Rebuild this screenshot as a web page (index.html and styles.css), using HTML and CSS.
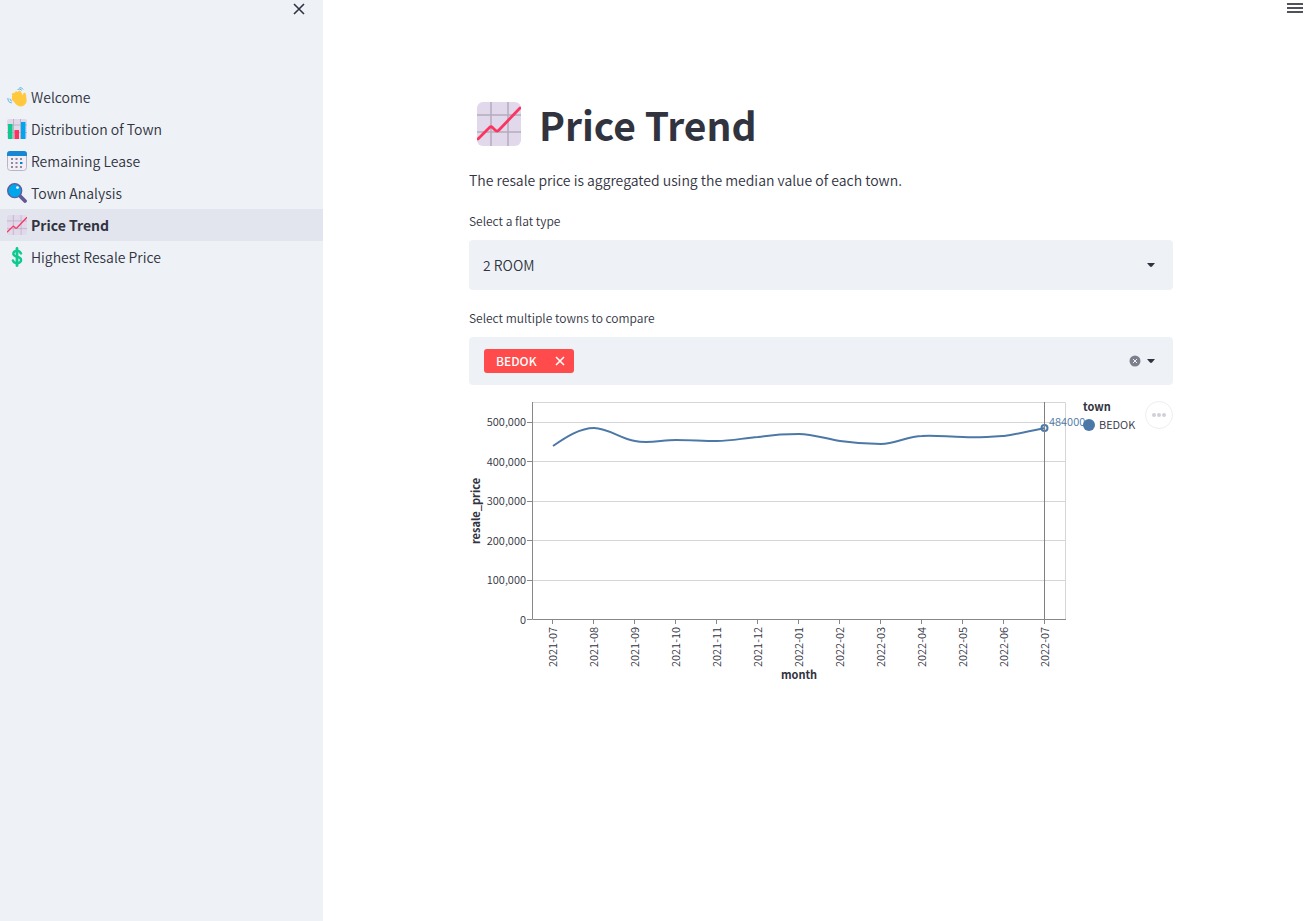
FILE: index.html
```html
<!DOCTYPE html>
<html lang="en">
<head>
<meta charset="utf-8">
<title>Price Trend</title>
<link rel="stylesheet" href="styles.css">
</head>
<body>
<svg class="defs" aria-hidden="true">
  <symbol id="trend" viewBox="0 0 44 44">
    <rect width="44" height="44" rx="6" fill="#e1d8ec"/>
    <path d="M14 0v44M31 0v44M0 13h44M0 30h44" stroke="#b4acbc" stroke-width="1.5"/>
    <path d="M1 37 12.500 25.500Q14 24 15.500 25.500L18 28Q20 30 22 28L43 6" fill="none" stroke="#fb355f" stroke-width="2.800" stroke-linecap="round"/>
  </symbol>
</svg>
<div class="app">
  <aside class="sidebar">
    <div class="sidebar-top">
      <button class="icon-button" type="button" aria-label="Close sidebar">
        <svg width="12" height="12" viewBox="0 0 12 12"><path d="M1 1l10 10M11 1 1 11" stroke="#31333f" stroke-width="1.600"/></svg>
      </button>
    </div>
    <nav class="nav">
      <a class="nav-item" href="#welcome">
        <svg class="nav-icon" viewBox="0 0 20 20">
          <path d="M5.200 6.600q.9-1.300 2.200-.3L8 5q1-1.500 2.300-.3l.6.500.4-.9q1.300-1.500 2.500.1l2 4q0-2.600 1.700-2.700 1.500.1 1.500 2l.6 5.300q.3 3.400-2.300 5.200-3.200 2-6.300.6-2-1-3.300-3L4.800 12.600q-.6-1.100.5-1.700-.9-1.200.1-2.100-.8-1.200-.2-2.200z" fill="#ffc83d"/>
          <path d="M10.500 2.500q2.200-1.500 4.400.8M12.300.9q2.500-1 3.800 1.600M.9 11q-.2 4.600 3.900 4.900M2.900 11.700q.1 2 2.200 2.500" fill="none" stroke="#50aee0" stroke-width=".9"/>
        </svg>
        <span>Welcome</span>
      </a>
      <a class="nav-item" href="#distribution">
        <svg class="nav-icon" viewBox="0 0 20 20">
          <rect width="20" height="20" rx="2" fill="#e1d8ec"/>
          <path d="M6.500 0v20M13.500 0v20M0 6h20M0 13.500h20" stroke="#b4acbc" stroke-width=".8"/>
          <path d="M1 5h4.500v15H1z" fill="#10c98f"/><path d="M7.500 11H12v9H7.500z" fill="#fb355f"/><path d="M14 3h4.500v17H14z" fill="#00a6ed"/>
        </svg>
        <span>Distribution of Town</span>
      </a>
      <a class="nav-item" href="#lease">
        <svg class="nav-icon" viewBox="0 0 20 20">
          <rect x=".5" y=".5" width="19" height="19" rx="3" fill="#f2eef7" stroke="#b9b5c3"/>
          <path d="M0 5V3q0-3 3-3h14q3 0 3 3v2z" fill="#1687d3"/>
          <path d="M4 7h2v2H4zm4.500 0h2v2h-2zm4.500 0h2v2h-2zM4 11h2v2H4zm4.500 0h2v2h-2zM4 15h2v2H4zm4.500 0h2v2h-2zm4.500 0h2v2h-2z" fill="#8d8998"/>
          <path d="M13 11h2.500v2H13z" fill="#0084d1"/>
        </svg>
        <span>Remaining Lease</span>
      </a>
      <a class="nav-item" href="#analysis">
        <svg class="nav-icon" viewBox="0 0 20 20">
          <path d="m13 13 5 5" stroke="#635994" stroke-width="3.800" stroke-linecap="round"/>
          <circle cx="7.700" cy="7.700" r="7" fill="#00a6ed" stroke="#635994" stroke-width="1.300"/>
          <circle cx="10.500" cy="4.600" r="1.400" fill="#fff"/>
        </svg>
        <span>Town Analysis</span>
      </a>
      <a class="nav-item active" href="#trend-page" aria-current="page">
        <svg class="nav-icon" viewBox="0 0 20 20"><use href="#trend"/></svg>
        <span>Price Trend</span>
      </a>
      <a class="nav-item" href="#highest">
        <svg class="nav-icon" viewBox="0 0 20 20">
          <path d="M10 1.500v17" stroke="#10c98f" stroke-width="2.800" stroke-linecap="round"/>
          <path d="M14 6.500Q13 3.900 10 3.900 6.400 4 6.300 6.700q0 2.100 3.700 2.900 4.100.8 4.100 3.500 0 2.900-4.100 3-3.300 0-4.100-2.700" fill="none" stroke="#10c98f" stroke-width="2.400" stroke-linecap="round"/>
        </svg>
        <span>Highest Resale Price</span>
      </a>
    </nav>
  </aside>
  <div class="page">
    <header class="toolbar">
      <button class="icon-button" type="button" aria-label="Menu">
        <svg width="16" height="12" viewBox="0 0 16 12"><path d="M0 2h16M0 6h16M0 10h16" stroke="#31333f" stroke-width="2" opacity=".85"/></svg>
      </button>
    </header>
    <main class="content">
      <h1 class="title"><svg class="title-icon" viewBox="0 0 44 44" aria-hidden="true"><use href="#trend"/></svg><span>Price Trend</span></h1>
      <p class="intro">The resale price is aggregated using the median value of each town.</p>
      <div class="field">
        <label class="label" for="flat">Select a flat type</label>
        <div class="control">
          <select class="select" id="flat"><option>2 ROOM</option></select>
          <svg class="caret" width="8" height="4" viewBox="0 0 8 4"><path d="M0 0h8L5 3.600Q4 4.400 3 3.600z" fill="#31333f"/></svg>
        </div>
      </div>
      <div class="field">
        <label class="label" for="towns">Select multiple towns to compare</label>
        <div class="control multi">
          <span class="tag">BEDOK
            <button class="icon-button" type="button" aria-label="Remove BEDOK"><svg width="10" height="10" viewBox="0 0 10 10"><path d="m1 1 8 8M9 1 1 9" stroke="#fff" stroke-width="1.600"/></svg></button>
          </span>
          <input class="town-input" id="towns" type="text">
          <button class="icon-button" type="button" aria-label="Clear all"><svg width="12" height="12" viewBox="0 0 12 12"><circle cx="6" cy="6" r="5.500" fill="#7d808b"/><path d="m4 4 4 4M8 4 4 8" stroke="#eef2f7"/></svg></button>
          <svg class="caret" width="8" height="4" viewBox="0 0 8 4"><path d="M0 0h8L5 3.600Q4 4.400 3 3.600z" fill="#31333f"/></svg>
        </div>
      </div>
      <div class="chart-wrap">
        <svg class="chart" viewBox="0 0 704 290" role="img" aria-label="Resale price by month">
          <path class="grid" d="M63 5.500h533.500V222M63 25.500h533M63 64.500h533M63 104.500h533M63 143.500h533M63 183.500h533"/>
          <path class="axis" d="M63.500 5v217.500H597M58 25.500h5M58 64.500h5M58 104.500h5M58 143.500h5M58 183.500h5M58 222.500h5M83.500 223v4M124.500 223v4M165.500 223v4M206.500 223v4M247.500 223v4M288.500 223v4M329.500 223v4M370.500 223v4M411.500 223v4M452.500 223v4M493.500 223v4M534.500 223v4M575.500 223v4"/>
          <g class="tick end">
            <text x="57" y="29">500,000</text><text x="57" y="69">400,000</text><text x="57" y="108">300,000</text><text x="57" y="148">200,000</text><text x="57" y="187">100,000</text><text x="57" y="227">0</text>
          </g>
          <g class="tick end">
            <text transform="translate(88 230) rotate(-90)">2021-07</text>
            <text transform="translate(129 230) rotate(-90)">2021-08</text>
            <text transform="translate(170 230) rotate(-90)">2021-09</text>
            <text transform="translate(211 230) rotate(-90)">2021-10</text>
            <text transform="translate(252 230) rotate(-90)">2021-11</text>
            <text transform="translate(293 230) rotate(-90)">2021-12</text>
            <text transform="translate(334 230) rotate(-90)">2022-01</text>
            <text transform="translate(375 230) rotate(-90)">2022-02</text>
            <text transform="translate(416 230) rotate(-90)">2022-03</text>
            <text transform="translate(457 230) rotate(-90)">2022-04</text>
            <text transform="translate(498 230) rotate(-90)">2022-05</text>
            <text transform="translate(539 230) rotate(-90)">2022-06</text>
            <text transform="translate(580 230) rotate(-90)">2022-07</text>
          </g>
          <text class="axis-title" transform="translate(11 114) rotate(-90)">resale_price</text>
          <text class="axis-title" x="330" y="282">month</text>
          <path class="line" d="M84 49C97 40 111 31 125 31S152 42 166 44C179 47 193 43 207 43S234 44 248 44 275 41 289 40C302 38 316 37 330 37S357 42 371 44 398 47 412 47 439 39 453 39C466 38 480 40 494 40 508 41 521 40 535 39 548 37 562 34 576 31"/>
          <circle class="point" cx="575.500" cy="31" r="3"/>
          <path class="rule" d="M575.500 5v217"/>
          <text class="value" x="580" y="29">484000</text>
          <circle cx="620" cy="28" r="6" fill="#4c78a8"/>
          <text class="legend-title" x="614" y="14">town</text>
          <text class="tick" x="630" y="32">BEDOK</text>
        </svg>
        <button class="chart-menu" type="button" aria-label="Chart actions"><svg width="14" height="4" viewBox="0 0 14 4"><circle cx="2" cy="2" r="2"/><circle cx="7" cy="2" r="2"/><circle cx="12" cy="2" r="2"/></svg></button>
      </div>
    </main>
  </div>
</div>
</body>
</html>
```
FILE: styles.css
```css
* { box-sizing: border-box; }
body {
  margin: 0;
  background: #fff;
  color: #31333f;
  font: 350 14px/24px "Noto Sans CJK SC", "Noto Sans", sans-serif;
}
button, input, select { font: inherit; color: inherit; }
.defs { position: absolute; width: 0; height: 0; }
.app { display: flex; min-height: 100vh; }
.icon-button {
  display: flex;
  padding: 0;
  border: 0;
  background: none;
  cursor: pointer;
}

.sidebar { flex: 0 0 323px; background: #eef2f7; }
.sidebar-top { display: flex; justify-content: flex-end; height: 81px; padding: 3px 18px; }
.sidebar-top .icon-button { align-self: flex-start; }
.nav { display: flex; flex-direction: column; }
.nav-item {
  display: flex;
  align-items: center;
  gap: 4px;
  height: 32px;
  padding-left: 7px;
  color: inherit;
  text-decoration: none;
}
.nav-item.active { background: #e2e5ed; font-weight: 700; }
.nav-icon { width: 20px; height: 20px; }

.page { flex: 1; min-width: 0; }
.toolbar { display: flex; justify-content: flex-end; height: 92px; padding: 2px 13px; }
.toolbar .icon-button { align-self: flex-start; }
.content { max-width: 707px; margin: 0 auto; padding-left: 3px; }
.title {
  display: flex;
  align-items: center;
  gap: 18px;
  margin: 0;
  padding: 4px 8px;
  font-size: 39px;
  line-height: 56px;
}
.title-icon { width: 44px; height: 44px; }
.intro { margin: 12px 0 17px; }
.field { margin-bottom: 16px; }
.field:has(.multi) { margin-bottom: 12px; }
.label { display: block; margin-bottom: 7px; font-size: 12px; line-height: 24px; }
.control {
  display: flex;
  align-items: center;
  height: 50px;
  padding-right: 18px;
  border-radius: 4px;
  background: #eef2f7;
}
.select {
  flex: 1;
  height: 100%;
  padding: 0 14px;
  border: 0;
  background: none;
  appearance: none;
}
.control.multi { gap: 6px; height: 48px; padding-left: 15px; }
.tag {
  display: flex;
  align-items: center;
  gap: 18px;
  height: 24px;
  padding: 0 9px 0 12px;
  border-radius: 3px;
  background: #ff4b4b;
  color: #fff;
  font-size: 12px;
  font-weight: 500;
}
.town-input { flex: 1; min-width: 0; border: 0; outline: 0; background: none; }

.chart-wrap { position: relative; }
.chart { display: block; width: 100%; overflow: visible; }
.grid { fill: none; stroke: #d6d6d6; }
.axis { fill: none; stroke: #888; }
.rule { stroke: #808080; }
.line { fill: none; stroke: #4c78a8; stroke-width: 2; }
.point { fill: none; stroke: #4c78a8; stroke-width: 2; }
.tick { fill: #31333f; font-size: 11px; }
.end { text-anchor: end; }
.axis-title { fill: #31333f; font-size: 11px; font-weight: 700; text-anchor: middle; }
.legend-title { fill: #31333f; font-size: 11px; font-weight: 700; }
.value { fill: #4c78a8; font-size: 11px; }
.chart-menu {
  position: absolute;
  top: 4px;
  right: 0;
  display: flex;
  align-items: center;
  justify-content: center;
  width: 28px;
  height: 28px;
  padding: 0;
  border: 1px solid #eee;
  border-radius: 50%;
  background: #fff;
  fill: #d0d0d6;
}
```
